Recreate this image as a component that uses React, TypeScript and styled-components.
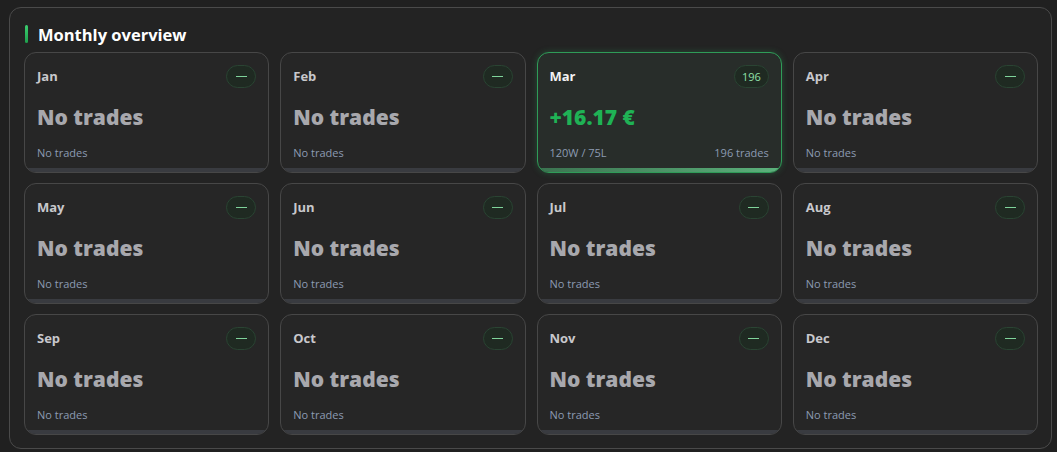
import styled, { createGlobalStyle } from 'styled-components';

type Month = {
  name: string;
  trades: number;
  wins?: number;
  losses?: number;
  pnl?: string;
};

const months: Month[] = [
  { name: 'Jan', trades: 0 },
  { name: 'Feb', trades: 0 },
  { name: 'Mar', trades: 196, wins: 120, losses: 75, pnl: '+16.17 €' },
  { name: 'Apr', trades: 0 },
  { name: 'May', trades: 0 },
  { name: 'Jun', trades: 0 },
  { name: 'Jul', trades: 0 },
  { name: 'Aug', trades: 0 },
  { name: 'Sep', trades: 0 },
  { name: 'Oct', trades: 0 },
  { name: 'Nov', trades: 0 },
  { name: 'Dec', trades: 0 },
];

const GlobalStyle = createGlobalStyle`
  body {
    margin: 0;
    background: #202020;
    font-family: "Open Sans", "Noto Sans", sans-serif;
  }
`;

const App = () => {
  return (
    <>
      <GlobalStyle />
      <Page>
        <Panel>
          <Heading>Monthly overview</Heading>
          <Grid>
            {months.map((m) => {
              const active = m.trades > 0;
              return (
                <Card key={m.name} $active={active}>
                  <CardHeader>
                    <MonthName $active={active}>{m.name}</MonthName>
                    <Badge>{active ? m.trades : <Dash />}</Badge>
                  </CardHeader>
                  <Value $active={active}>{active ? m.pnl : 'No trades'}</Value>
                  <Footer>
                    <span>{active ? `${m.wins}W / ${m.losses}L` : 'No trades'}</span>
                    {active && <span>{m.trades} trades</span>}
                  </Footer>
                  <Bar $active={active} />
                </Card>
              );
            })}
          </Grid>
        </Panel>
      </Page>
    </>
  );
};

const Page = styled.div`
  padding: 7px 5px 5px 9px;
`;

const Panel = styled.section`
  background: #232323;
  border: 1px solid #4a4a4a;
  border-radius: 12px;
  padding: 14px 13px 13px 14px;
`;

const Heading = styled.h2`
  display: flex;
  align-items: center;
  gap: 10px;
  margin: 0 0 6px 1px;
  font-size: 16.5px;
  font-weight: 700;
  color: #ffffff;
  height: 24px;

  &::before {
    content: '';
    width: 3px;
    height: 18px;
    border-radius: 2px;
    background: linear-gradient(#3ccf70, #1e9e4c);
  }
`;

const Grid = styled.div`
  display: grid;
  grid-template-columns: repeat(4, 1fr);
  column-gap: 11px;
  row-gap: 10px;
`;

const Card = styled.div<{ $active: boolean }>`
  display: flex;
  flex-direction: column;
  height: 121px;
  box-sizing: border-box;
  padding: 12px 12px 0;
  border-radius: 12px;
  overflow: hidden;
  background: ${(p) => (p.$active ? '#282d2a' : '#262626')};
  border: 1px solid ${(p) => (p.$active ? '#2f9c58' : '#474747')};
  box-shadow: ${(p) => (p.$active ? '0 0 6px rgba(47, 156, 88, 0.35)' : 'none')};
`;

const CardHeader = styled.div`
  display: flex;
  justify-content: space-between;
  align-items: center;
  height: 22px;
`;

const MonthName = styled.span<{ $active: boolean }>`
  font-size: 13px;
  font-weight: 700;
  color: ${(p) => (p.$active ? '#f2f2f2' : '#c8c8cc')};
`;

const Badge = styled.span`
  display: inline-flex;
  align-items: center;
  justify-content: center;
  min-width: 30px;
  height: 23px;
  padding: 0 7px;
  box-sizing: border-box;
  border-radius: 12px;
  background: #1f2a22;
  border: 1px solid #2a4433;
  color: #8fe0a8;
  font-size: 11px;
`;

const Dash = styled.span`
  display: block;
  width: 11px;
  height: 1px;
  background: #7fd49b;
`;

const Value = styled.div<{ $active: boolean }>`
  margin-top: 16px;
  font-size: 21px;
  font-weight: 800;
  line-height: 28px;
  color: ${(p) => (p.$active ? '#1fb255' : '#a8a8ad')};
`;

const Footer = styled.div`
  display: flex;
  justify-content: space-between;
  margin-top: 15px;
  font-size: 11px;
  line-height: 14px;
  color: #8c9bb2;
`;

const Bar = styled.div<{ $active: boolean }>`
  margin: auto -12px 0;
  height: 4px;
  background: ${(p) =>
    p.$active ? 'linear-gradient(90deg, #3b7350, #5cb27c)' : '#393b40'};
`;

export default App;
